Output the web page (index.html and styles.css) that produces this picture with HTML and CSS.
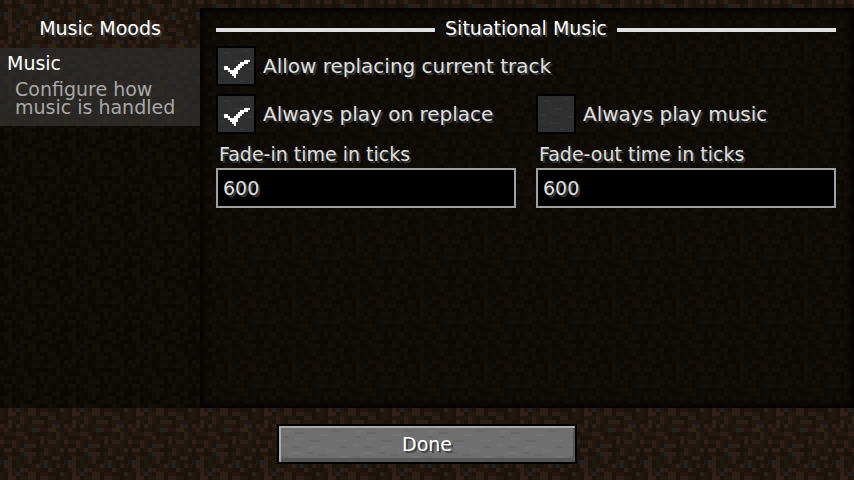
FILE: index.html
```
<!DOCTYPE html>
<html lang="en">
<head>
  <meta charset="UTF-8">
  <meta name="viewport" content="width=device-width, initial-scale=1.0">
  <title>Music Moods</title>
  <link rel="stylesheet" href="styles.css">
</head>
<body>
  <form class="screen">
    <div class="main">
      <nav class="sidebar">
        <h1 class="title">Music Moods</h1>
        <div class="categories">
          <a class="category" href="#music">
            <span class="category-name">Music</span>
            <span class="category-text">Configure how music is handled</span>
          </a>
        </div>
      </nav>
      <section class="panel" id="music">
        <h2 class="heading">Situational Music</h2>
        <div class="options">
          <label class="check wide"><input type="checkbox" checked>Allow replacing current track</label>
          <label class="check"><input type="checkbox" checked>Always play on replace</label>
          <label class="check"><input type="checkbox">Always play music</label>
          <div class="field">
            <label for="fade-in">Fade-in time in ticks</label>
            <input id="fade-in" type="text" value="600">
          </div>
          <div class="field">
            <label for="fade-out">Fade-out time in ticks</label>
            <input id="fade-out" type="text" value="600">
          </div>
        </div>
      </section>
    </div>
    <div class="footer">
      <button class="done" type="button">Done</button>
    </div>
  </form>
</body>
</html>
```
FILE: styles.css
```
:root {
  /* 16x16 dirt tile, drawn at 4px per texel */
  --dirt: url("data:image/svg+xml,%3Csvg xmlns='http://www.w3.org/2000/svg' width='64' height='64' viewBox='0 0 16 16' shape-rendering='crispEdges'%3E%3Cpath fill='%23231810' d='M0 0h16v16H0z'/%3E%3Cpath fill='%231b120c' d='M0 0h1v2H0zM3 0h1v1H3zM8 0h3v1H8zM13 0h1v2h-1zM3 1h2v1H3zM9 1h1v2H9zM0 2h2v1H0zM5 2h1v2H5zM11 2h2v1h-2zM15 2h1v2h-1zM3 3h1v2H3zM8 3h2v1H8zM13 3h1v2h-1zM0 4h1v2H0zM6 4h2v1H6zM10 5h2v1h-2zM4 5h1v1H4zM14 5h2v1h-2zM1 6h1v3H1zM6 6h1v1H6zM9 6h1v2H9zM12 6h3v1h-3zM4 7h1v1H4zM7 8h1v2H7zM14 7h1v2h-1zM0 9h2v1H0zM4 9h2v1H4zM10 8h2v1h-2zM11 9h1v2h-1zM3 10h1v2H3zM6 10h1v2H6zM15 10h1v2h-1zM0 12h1v1H0zM9 12h3v1H9zM1 13h3v1H1zM7 12h1v2H7zM13 12h1v2h-1zM5 14h1v2H5zM9 14h1v2H9zM11 14h1v1h-1zM15 14h1v2h-1zM1 15h2v1H1z'/%3E%3Cpath fill='%232e2017' d='M1 0h2v1H1zM5 0h1v1H5zM11 0h1v2h-1zM15 0h1v1h-1zM7 1h2v1H7zM2 2h1v2H2zM7 2h1v2H7zM13 2h2v1h-2zM11 3h1v1h-1zM1 4h2v1H1zM9 4h1v1H9zM14 4h1v1h-1zM5 5h2v1H5zM12 5h1v1h-1zM2 5h1v1H2zM2 6h1v1H2zM7 6h2v1H7zM15 6h1v1h-1zM2 7h2v1H2zM7 7h2v1H7zM10 7h2v1h-2zM5 8h1v2H5zM12 8h2v1h-2zM2 9h1v2H2zM8 9h3v1H8zM13 10h1v1h-1zM4 10h1v1H4zM0 10h1v1H0zM9 11h1v1H9zM12 11h2v1h-2zM1 11h1v1H1zM4 12h2v1H4zM14 12h1v2h-1zM6 13h1v1H6zM10 13h1v2h-1zM0 14h1v1H0zM3 14h1v2H3zM12 14h2v1h-2zM7 15h2v1H7z'/%3E%3Cpath fill='%231e2327' d='M1 3h1v1H1zM6 1h1v1H6zM6 15h1v1H6zM8 11h1v1H8zM14 10h1v1h-1zM11 4h1v1h-1zM4 6h1v1H4z'/%3E%3C/svg%3E");
  --stone: url("data:image/svg+xml,%3Csvg xmlns='http://www.w3.org/2000/svg' width='72' height='36' viewBox='0 0 36 18' shape-rendering='crispEdges'%3E%3Cpath fill='%23fff' fill-opacity='.03' d='M2 2h4v1H2zM13 1h3v1h-3zM20 4h5v1h-5zM8 6h4v1H8zM28 7h6v1h-6zM1 9h3v1H1zM15 10h5v1h-5zM24 12h4v1h-4zM6 13h5v1H6zM31 15h3v1h-3zM11 16h2v1h-2z'/%3E%3Cpath fill='%23000' fill-opacity='.06' d='M8 3h5v1H8zM26 2h4v1h-4zM2 5h3v1H2zM15 7h6v1h-6zM30 10h4v1h-4zM7 10h4v1H7zM20 14h4v1h-4zM1 15h4v1H1zM14 13h3v1h-3z'/%3E%3C/svg%3E");
  --tick: url("data:image/svg+xml,%3Csvg xmlns='http://www.w3.org/2000/svg' width='40' height='40' viewBox='0 0 20 20' shape-rendering='crispEdges'%3E%3Cpath fill='%23fff' d='M14 7h3v1h-3zM12 8h4v1h-4zM11 9h3v1h-3zM4 10h2v1H4zM10 10h3v1h-3zM4 11h3v1H4zM9 11h3v1H9zM6 12h5v1H6zM7 13h4v1H7zM8 14h2v1H8zM9 15h1v1H9z'/%3E%3C/svg%3E");
}

* {
  box-sizing: border-box;
}

body {
  margin: 0;
  background: #231810 var(--dirt);
  color: #fff;
  font-family: "DejaVu Sans", sans-serif;
  font-size: 19px;
  line-height: 20px;
}

h1, h2 {
  margin: 0;
  font-size: 19px;
  font-weight: normal;
}

.screen {
  display: flex;
  flex-direction: column;
  min-height: 100vh;
}

.main {
  flex: 1;
  display: flex;
}

.sidebar {
  width: 200px;
  display: flex;
  flex-direction: column;
}

.title {
  padding: 18px 0 10px;
  text-align: center;
  text-shadow: 2px 2px #3e4142;
}

.categories {
  flex: 1;
  background: rgba(4, 5, 1, 0.62);
}

.category {
  display: block;
  padding: 5px 7px 10px;
  background: rgba(92, 92, 92, 0.36);
  color: #fff;
  text-decoration: none;
}

.category-name,
.category-text {
  display: block;
}

.category-text {
  padding: 7px 0 0 8px;
  color: #a8a8a8;
  line-height: 18px;
}

.panel {
  flex: 1;
  margin-top: 8px;
  padding: 10px 18px 16px 16px;
  background: linear-gradient(rgba(4, 4, 1, 0.62), rgba(4, 4, 1, 0.62)), var(--dirt) 20px 12px;
  box-shadow: inset 0 0 8px 2px #000;
}

.heading {
  display: flex;
  align-items: center;
  gap: 10px;
  color: #fff;
  text-shadow: 2px 2px #3e4142;
}

.heading::before,
.heading::after {
  content: "";
  flex: 1;
  height: 4px;
  margin-top: 4px;
  background: #e0e0e0;
}

.options {
  display: grid;
  grid-template-columns: 1fr 1fr;
  gap: 8px 20px;
  margin-top: 8px;
  color: #e0e0e0;
  text-shadow: 2px 2px #383b3c;
}

.wide {
  grid-column: span 2;
}

.check {
  display: flex;
  align-items: center;
  gap: 7px;
  font-size: 20px;
}

.check input {
  appearance: none;
  width: 40px;
  height: 40px;
  margin: 0;
  border: 2px solid #000;
  background: #2f2f2f var(--stone);
}

.check input:checked {
  background: var(--tick) border-box, #2f2f2f var(--stone);
  background-origin: border-box, padding-box;
}

.field {
  display: flex;
  flex-direction: column;
  gap: 4px;
  padding-top: 2px;
}

.field label {
  padding-left: 3px;
}

.field input {
  width: 100%;
  height: 40px;
  padding: 0 5px;
  border: 2px solid #a0a0a0;
  border-radius: 0;
  background: #000;
  color: #e0e0e0;
  font: inherit;
  text-shadow: inherit;
}

.footer {
  display: flex;
  justify-content: center;
  padding: 16px;
}

.done {
  width: 300px;
  height: 40px;
  padding: 0;
  border: 2px solid #000;
  background: #6f6f6f var(--stone);
  box-shadow: inset 2px 2px #aaa, inset -2px -4px #565656;
  color: #fff;
  font: inherit;
  text-shadow: 2px 2px #3e3e3e;
}
```
